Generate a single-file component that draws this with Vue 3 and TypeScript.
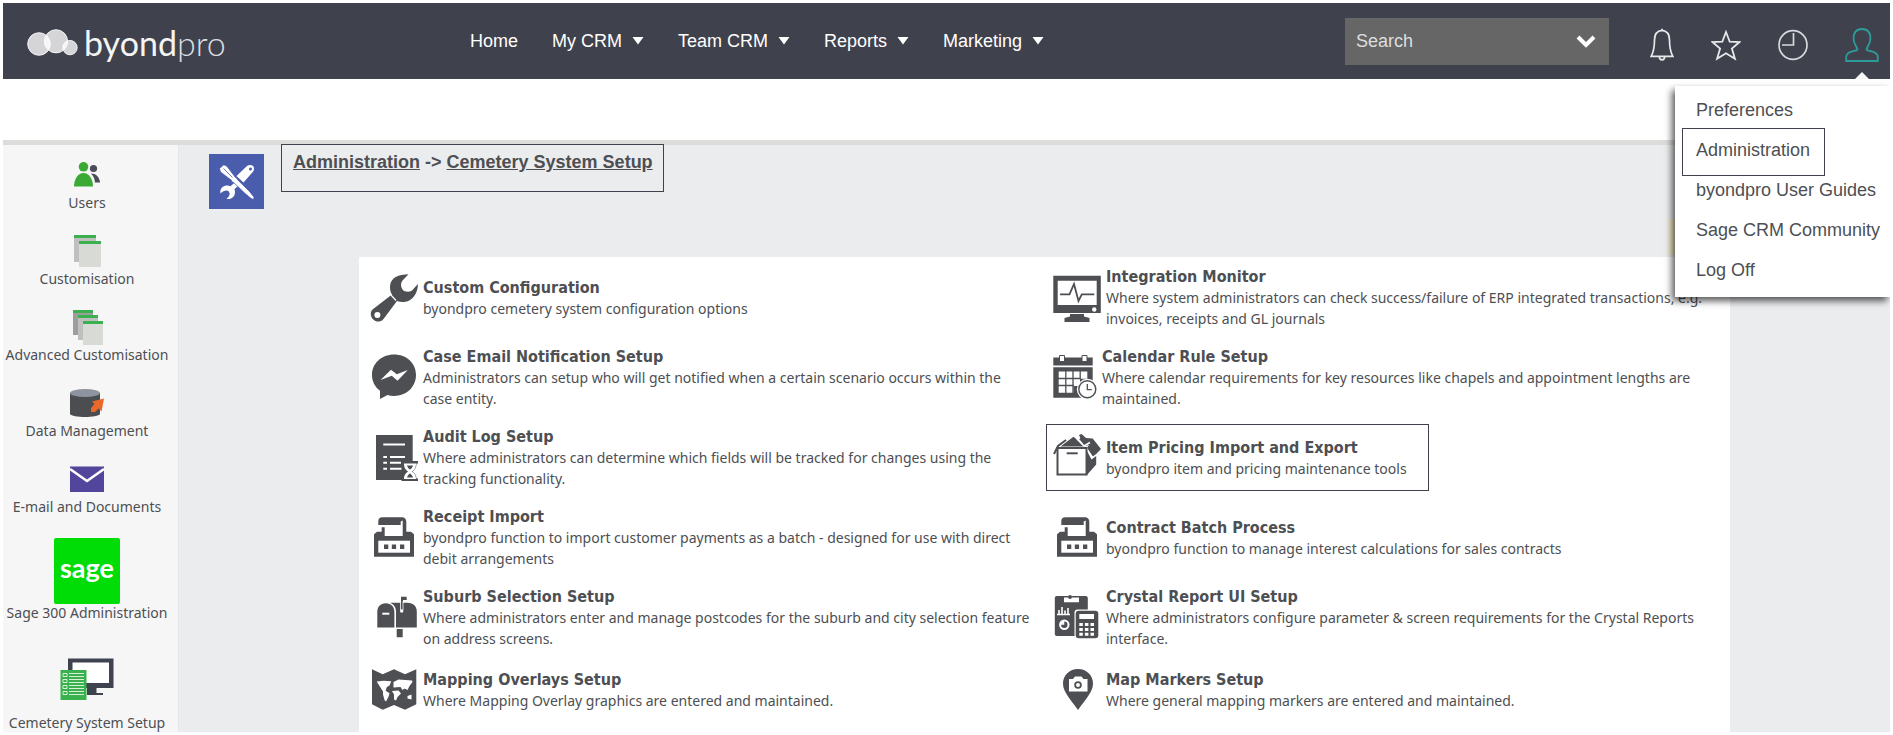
<script setup lang="ts">
import { ref } from 'vue'

interface NavEntry {
  label: string
  hasMenu: boolean
}

interface SetupItem {
  icon: string
  title: string
  text: string
  highlighted?: boolean
}

const search = ref('')

const nav: NavEntry[] = [
  { label: 'Home', hasMenu: false },
  { label: 'My CRM', hasMenu: true },
  { label: 'Team CRM', hasMenu: true },
  { label: 'Reports', hasMenu: true },
  { label: 'Marketing', hasMenu: true },
]

const sideLinks = [
  { icon: 'users', label: 'Users' },
  { icon: 'pages', label: 'Customisation' },
  { icon: 'stack', label: 'Advanced Customisation' },
  { icon: 'data', label: 'Data Management' },
  { icon: 'mail', label: 'E-mail and Documents' },
  { icon: 'sage', label: 'Sage 300 Administration' },
  { icon: 'cemetery', label: 'Cemetery System Setup' },
]

const userMenu = [
  { label: 'Preferences', marked: false },
  { label: 'Administration', marked: true },
  { label: 'byondpro User Guides', marked: false },
  { label: 'Sage CRM Community', marked: false },
  { label: 'Log Off', marked: false },
]

const items: SetupItem[] = [
  { icon: 'wrench', title: 'Custom Configuration', text: 'byondpro cemetery system configuration options' },
  { icon: 'monitor', title: 'Integration Monitor', text: 'Where system administrators can check success/failure of ERP integrated transactions, e.g. invoices, receipts and GL journals' },
  { icon: 'message', title: 'Case Email Notification Setup', text: 'Administrators can setup who will get notified when a certain scenario occurs within the case entity.' },
  { icon: 'calendar', title: 'Calendar Rule Setup', text: 'Where calendar requirements for key resources like chapels and appointment lengths are maintained.' },
  { icon: 'log', title: 'Audit Log Setup', text: 'Where administrators can determine which fields will be tracked for changes using the tracking functionality.' },
  { icon: 'box', title: 'Item Pricing Import and Export', text: 'byondpro item and pricing maintenance tools', highlighted: true },
  { icon: 'receipt', title: 'Receipt Import', text: 'byondpro function to import customer payments as a batch - designed for use with direct debit arrangements' },
  { icon: 'receipt', title: 'Contract Batch Process', text: 'byondpro function to manage interest calculations for sales contracts' },
  { icon: 'mailbox', title: 'Suburb Selection Setup', text: 'Where administrators enter and manage postcodes for the suburb and city selection feature on address screens.' },
  { icon: 'report', title: 'Crystal Report UI Setup', text: 'Where administrators configure parameter & screen requirements for the Crystal Reports interface.' },
  { icon: 'map', title: 'Mapping Overlays Setup', text: 'Where Mapping Overlay graphics are entered and maintained.' },
  { icon: 'pin', title: 'Map Markers Setup', text: 'Where general mapping markers are entered and maintained.' },
]
</script>

<template>
  <div class="page">
    <header class="topbar">
      <a class="brand" href="#">
        <svg class="brand-mark" width="51" height="28" viewBox="0 0 51 28" aria-hidden="true">
          <g fill="#fff" fill-opacity=".78" stroke="#fff" stroke-opacity=".85">
            <circle cx="12" cy="15" r="11.3" />
            <circle cx="29" cy="12.3" r="11.6" />
            <circle cx="43" cy="18.6" r="7.2" />
          </g>
        </svg>
        <span class="brand-name"><span>byond</span><span class="brand-light">pro</span></span>
      </a>
      <nav class="nav">
        <template v-for="entry in nav" :key="entry.label">
          <button v-if="entry.hasMenu" class="nav-item" type="button">
            {{ entry.label }}
            <svg width="12" height="8" viewBox="0 0 12 8" aria-hidden="true"><path d="M.500 0h11L6 7.500z" fill="#fff" /></svg>
          </button>
          <a v-else class="nav-item" href="#">{{ entry.label }}</a>
        </template>
      </nav>
      <form class="search" @submit.prevent>
        <input v-model="search" type="text" placeholder="Search" aria-label="Search" />
        <button type="button" aria-label="Search options">
          <svg width="20" height="13" viewBox="0 0 20 13"><path d="M2 2l8 8 8-8" fill="none" stroke="#fff" stroke-width="4" /></svg>
        </button>
      </form>
      <div class="tools">
        <button type="button" aria-label="Notifications">
          <svg width="24" height="34" viewBox="0 0 24 34" fill="none" stroke="#e8e8ea" stroke-width="1.7">
            <path d="M12 2.4c-5.200 .6-7.500 4-7.500 9.600 0 8-1 12-3.300 16.300h21.600C20.500 24 19.500 20 19.500 12c0-5.600-2.300-9-7.500-9.600z" />
            <path d="M9.300 28.500a2.700 3.300 0 0 0 5.400 0M12 .8v2" />
          </svg>
        </button>
        <button type="button" aria-label="Favourites">
          <svg width="30" height="34" viewBox="0 0 30 34" fill="none" stroke="#e8e8ea" stroke-width="1.8">
            <path d="M15 4l3.700 9.700 9.900.3-7.700 6.600 3 10.200L15 25.200l-8.900 5.600 3-10.200L1.400 14l9.900-.3z" />
          </svg>
        </button>
        <button type="button" aria-label="Recent">
          <svg width="30" height="34" viewBox="0 0 30 34" fill="none" stroke="#d8d9dc" stroke-width="1.7">
            <ellipse cx="15" cy="17" rx="14" ry="14.400" />
            <path d="M15.500 5v12H4" />
          </svg>
        </button>
        <button type="button" aria-label="User menu">
          <svg width="34" height="34" viewBox="0 0 34 34" fill="none" stroke="#2e9a9a" stroke-width="1.8">
            <path d="M12.500 21.500c-.2-2-3.300-5-3.800-9.500C8 5 11 1 17 1s9 4 8.300 11c-.5 4.500-3.600 7.500-3.800 9.500 1.500 2.500 11.300 1 11.300 7.500v4H1.200v-4c0-6.500 9.800-5 11.300-7.500z" />
          </svg>
        </button>
      </div>
      <svg class="pointer" width="14" height="7" viewBox="0 0 14 7" aria-hidden="true"><path d="M0 7l7-7 7 7z" fill="#f6f6f6" /></svg>
    </header>

    <div class="strip"></div>

    <div class="body">
      <aside class="sidebar">
        <a v-for="link in sideLinks" :key="link.label" class="side-link" href="#">
          <svg v-if="link.icon === 'users'" width="36" height="36" viewBox="0 0 36 36">
            <circle cx="24.500" cy="10.500" r="3.600" fill="#4a4c59" />
            <path d="M22 15.500c5 0 8 3 9.200 9H26c-.3-4-1.500-6.500-4-9z" fill="#4a4c59" />
            <circle cx="14.500" cy="8.800" r="4.800" fill="#3aaa35" />
            <path d="M5 28.500c0-7 3.500-13.500 9.500-13.500S24 21.500 24 28.500z" fill="#3aaa35" />
          </svg>
          <svg v-else-if="link.icon === 'pages'" width="36" height="36" viewBox="0 0 36 36">
            <path d="M5 1h22v27H5z" fill="#bfc0be" /><path d="M5 1h22v3H5z" fill="#3bb04f" />
            <path d="M10 7h22v26H10z" fill="#d8dad5" /><path d="M10 7h22v3H10z" fill="#3bb04f" />
          </svg>
          <svg v-else-if="link.icon === 'stack'" width="36" height="36" viewBox="0 0 36 36">
            <path d="M4 0h20v25H4z" fill="#9c9d9c" /><path d="M4 0h20v3H4z" fill="#3bb04f" />
            <path d="M9 5h20v25H9z" fill="#bfc0be" /><path d="M9 5h20v3H9z" fill="#3bb04f" />
            <path d="M14 11h20v24H14z" fill="#d8dad5" /><path d="M14 11h20v3H14z" fill="#3bb04f" />
          </svg>
          <svg v-else-if="link.icon === 'data'" width="36" height="36" viewBox="0 0 36 36">
            <path d="M1 7v21c2 4 28 4 30 0V7z" fill="#4b4d51" />
            <ellipse cx="16" cy="7" rx="15" ry="4" fill="#8d939f" />
            <path d="M35 12.500l-12 3 2.500 2.500-3.500 4v4h4l3.500-3.500 3 3z" fill="#e9682a" />
          </svg>
          <svg v-else-if="link.icon === 'mail'" width="36" height="36" viewBox="0 0 36 36">
            <path d="M1 4.500h34v25.500H1z" fill="#52459c" />
            <path d="M1 7l17 12L35 7" fill="none" stroke="#fff" stroke-width="2.600" />
          </svg>
          <span v-else-if="link.icon === 'sage'" class="sage-tile">sage</span>
          <svg v-else width="54" height="70" viewBox="0 0 54 70">
            <path d="M8 14.500h45.500V44H8z" fill="#3f4350" /><path d="M12.500 18.500H49V39H12.500z" fill="#fff" />
            <path d="M27 44h9.500v5H43v2H27z" fill="#3f4350" />
            <path d="M.5 26h26v30H.5z" fill="#3bb04f" />
            <g fill="none" stroke="#d6efd6" stroke-width="1">
              <path d="M3 29.500h4v3H3zM3 35.500h4v3H3zM3 41.500h4v3H3zM3 47.500h4v3H3z" />
              <path d="M9 29.500h15M9 32.500h15M9 35.500h15M9 38.500h15M9 41.500h15M9 44.500h15M9 47.500h15M9 50.500h15" />
            </g>
          </svg>
          <span class="side-label">{{ link.label }}</span>
        </a>
      </aside>

      <main class="main">
        <div class="heading">
          <svg class="heading-icon" width="55" height="55" viewBox="0 0 55 55" aria-hidden="true">
            <path d="M0 0h55v55H0z" fill="#4a5dac" />
            <g fill="#fff">
              <path d="M38 12c2-1.500 7-1.500 7 2.500 0 1.800-.6 2.800-1.500 3.700L34.500 28.500 27.500 22z" />
              <path d="M28 26.500l3.500 3.500-6 5c1 3 .5 7-2 8.500-2 1.500-4 1.800-6 1.300 3-2.500 4-4.500 2.500-7-1.500-2-5-1.500-8.500 1.700-.8-3.500 1-6.500 4-7.500 2-.8 4.500-.5 6 .3z" />
              <path d="M10.500 14.500l4-3.500c2 0 3 .8 4 2l8 10.500c1 .3 1.700 1 2 2.200l11.500 11.200 5 6.200-.4 2.400-2.500-1-6-5-11.500-11c-1.200-.3-2-1-2.200-2.200L11.500 18z" stroke="#4a5dac" stroke-width=".8" />
            </g>
            <circle cx="41.500" cy="15" r="1.500" fill="#4a5dac" />
            <path d="M14.500 14.500l9 9" stroke="#4a5dac" stroke-width=".8" />
          </svg>
          <h1 class="crumbs"><a href="#">Administration</a> -&gt; <a href="#">Cemetery System Setup</a></h1>
          <div class="note"></div>
        </div>

        <section class="panel">
          <a v-for="item in items" :key="item.title" href="#" class="item" :class="{ highlighted: item.highlighted }">
            <svg class="item-icon" :class="item.icon" height="48" :viewBox="item.icon === 'calendar' ? '0 0 44 48' : '0 0 48 48'" aria-hidden="true">
              <template v-if="item.icon === 'wrench'">
                <path d="M38.500.2C29 .2 20 3.500 20 13c0 3 .7 5.500 2 7.500L2.500 35.500c-4.500 5 .5 12.500 6.500 12 2-.2 3.300-1 4.500-2.500L27 27c2 .8 4.500 1.200 7 1 8.500-.8 14-8.500 13.900-18L42 16.500c-3 2-7.500 1.500-9.500-1-2-3-2-7 .5-9.500z" />
                <path d="M20.500 20.500l5.500 6" stroke="#fff" stroke-width="1.200" />
                <circle cx="7.400" cy="41" r="3" fill="#fff" />
              </template>
              <template v-else-if="item.icon === 'message'">
                <path d="M24 .6C11.500.6 2 9.500 2 21c0 6.500 3 12 8 15.800V45l7.500-4c2 .6 4.300.9 6.500.9 12.500 0 22-9 22-20.900S36.500.6 24 .6z" />
                <path d="M10.500 26L21 15.700l5.800 4.500 11-4.200L27.500 26.800l-5.700-5z" fill="#fff" />
              </template>
              <template v-else-if="item.icon === 'log'">
                <path d="M6 1h36.700v45H6z" />
                <path d="M13.300 10.500H35M20 23h15M20 28.700h11M20 34.700h13M13.300 23h3.700M13.300 28.700h3.700M13.300 34.700h3.700" stroke="#fff" stroke-width="1.900" />
                <path d="M31.500 27H48v2.500h-1.500c0 4-1.500 6-4 8 2.500 2 4 4 4 7H48V47H31.500z" />
                <path d="M34 29.500h12c0 4.500-1.500 6-4 8 2.500 2 4 3.500 4 7.500H34c0-4 1.500-5.500 4-7.500-2.500-2-4-3.500-4-8z" fill="#fff" />
                <path d="M37 31.500h6c-.5 2-1.500 3-3 4-1.500-1-2.500-2-3-4zM37 43.500c.5-2 1.500-3 3-4 1.500 1 2.500 2 3 4z" />
              </template>
              <template v-else-if="item.icon === 'receipt'">
                <path d="M8.300 11V7c0-2.500 1.500-3.800 4-3.800h19c3.500 0 5 1.800 5 5v9.500H41l3 2.500v22.500H4V20.200l3-2.500h4.700v-4.500h3V22h18V6.500l-2 1V11z" />
                <path d="M8.300 26.700h31.700v12H8.300z" fill="#fff" />
                <path d="M14 30.500h4.300V35H14zM21.800 30.500h4.300V35h-4.300zM30 30.500h4.300V35H30z" />
              </template>
              <template v-else-if="item.icon === 'mailbox'">
                <path d="M7.300 33.500V18c0-5 3-8.700 8.500-8.700s8.600 3.700 8.600 8.700v15.500zM20 8.700h17.500c6 0 9.300 3.500 9.300 9v15.800H26V18c0-4.500-2-7.800-6-9.300zM26.700 35h6v8.300h-6zM31 2.700h5.700V6H33v4h-2z" />
                <path d="M12.300 18.700h7v2h-7z" fill="#fff" />
                <path d="M30.500 7v9M33 7v9" stroke="#fff" stroke-width=".8" /><circle cx="31.700" cy="17" r="1.700" fill="#fff" />
              </template>
              <template v-else-if="item.icon === 'map'">
                <path d="M2 3.300l10.700 5 11.300-5 11 5 11.300-5v35l-11.300 5.400L24 39l-11.300 4.700L2 38.300z" />
                <path d="M6.700 15.500l7-.8 7.500.5-1.500 4-3 2-1 3.500 3.800 2.500-1 3.500-2.500 4.800-1.500-1.500-1.500-5.500 0-3-3.500-5.500zM23.500 16l5-2.500L42 14.500l.5 1.500-3 4-2 4-3-1.500-2 1.500-2-3-7 .5zM22 25l6.500-.5 2.500 3-3.500 3.500-1.500 3.500-2-1v-5zM37.500 30l4-1.500v5l-4-1z" fill="#fff" />
              </template>
              <template v-else-if="item.icon === 'monitor'">
                <path d="M.3 1.700h47.500V39H.3zM17 40h14v2.500l5.500 1.500v4h-25v-4l5.500-1.500z" />
                <path d="M4.700 6.700h39V31h-39z" fill="#fff" />
                <path d="M7 20.300h9.500L21 10l4.500 17 3.300-6.700h12.500" fill="none" stroke="#4d4f53" stroke-width="1.800" />
                <circle cx="41.300" cy="35.500" r="2.200" fill="#fff" />
              </template>
              <template v-else-if="item.icon === 'calendar'">
                <path d="M.3 3.500h39.400v8H.3zM.3 13.300h39.400v30.400H.3z" />
                <path d="M5.700 17.500h28.600v7.300H27V32h-6.500v6.700H5.700z" fill="#fff" />
                <path d="M12.800 17v22M20 17v22M27.200 17v8M5 24.500h22M5 31.500h16" stroke="#4d4f53" stroke-width="1.300" />
                <path d="M6.500 1.500h5v6h-5zM29 1.500h5v6h-5z" fill="#fff" stroke="#4d4f53" />
                <circle cx="34.300" cy="35.300" r="10.500" fill="#fff" />
                <circle cx="34.300" cy="35.300" r="8.500" fill="#fff" stroke="#4d4f53" stroke-width="1.400" />
                <path d="M34.300 30v5.700h4.500" fill="none" stroke="#4d4f53" stroke-width="1.300" />
              </template>
              <template v-else-if="item.icon === 'box'">
                <path d="M7.500 12.500L20.500 2.700 32 12.500zM26 1l2.500-1L33 4l6.700.5L48 15l-7.700 8-6.300-9 2-3-5 1z" />
                <path d="M1 20l4-8L13 6M27 4.500l5.500 6L38 9" fill="none" stroke="#4d4f53" stroke-width="2" />
                <path d="M24 5l7 7 6-3.500M33.500 14l5.500 10 4-3" fill="none" stroke="#fff" stroke-width="1.500" />
                <path d="M33.500 16l5 9.500 4.700-3.500v8.500l-9.700 11z" />
                <path d="M4.500 14h29v26.500h-29z" fill="#fff" stroke="#4d4f53" stroke-width="2" />
                <path d="M13.700 19.300h11" stroke="#4d4f53" stroke-width="2" />
              </template>
              <template v-else-if="item.icon === 'report'">
                <rect x="1.800" y="2" width="33" height="40" rx="2" />
                <path d="M11 3.500h4c0-2 4-2 4 0h7v4.800H11z" fill="#fff" /><circle cx="17" cy="3" r="2" />
                <path d="M4 20.500h13M6 20v-4M9 20v-7M12 20v-3.500M15 20v-6" stroke="#fff" stroke-width="1.600" />
                <circle cx="11.300" cy="30.700" r="5.200" fill="#fff" /><path d="M11.300 30.700V27.500a3.200 3.200 0 1 1-3.200 3.200z" />
                <rect x="21.500" y="15.500" width="25" height="30" rx="3" fill="#fff" />
                <rect x="22.700" y="16.700" width="22.600" height="27.600" rx="3" />
                <path d="M26.300 20H41v5H26.300z" fill="#fff" />
                <path d="M26.300 30.500H41M26.300 35.500H41M26.300 40.300H41" stroke="#fff" stroke-width="3" stroke-dasharray="3.500 2.100" />
              </template>
              <template v-else>
                <path d="M25 3c8.500 0 15 6.300 15 14.500 0 8-6 14-15 26.500C16 31.500 10 25.500 10 17.500 10 9.300 16.500 3 25 3z" />
                <path d="M16 13h4l2-2.500h6.500l2 2.500h4v12.500H16z" fill="#fff" />
                <circle cx="25" cy="19" r="2.900" fill="none" stroke="#4d4f53" stroke-width="1.800" />
              </template>
            </svg>
            <span class="item-copy">
              <strong>{{ item.title }}</strong>
              <span>{{ item.text }}</span>
            </span>
          </a>
        </section>
      </main>
    </div>

    <ul class="user-menu">
      <li v-for="entry in userMenu" :key="entry.label" :class="{ marked: entry.marked }">
        <a href="#">{{ entry.label }}</a>
      </li>
    </ul>
  </div>
</template>

<style>
body {
  margin: 0;
  background: #fff;
}
</style>

<style scoped>
* {
  box-sizing: border-box;
}

.page {
  position: relative;
  display: flex;
  flex-direction: column;
  min-height: calc(100vh - 6px);
  margin: 3px;
  overflow: hidden;
  color: #4d4f53;
  font-family: "Liberation Sans", Arial, sans-serif;
  font-size: 18px;
}

a {
  color: inherit;
  text-decoration: none;
}

button {
  padding: 0;
  border: 0;
  background: none;
  color: inherit;
  font: inherit;
  cursor: pointer;
}

svg {
  display: block;
  flex: none;
}

.topbar {
  position: relative;
  display: flex;
  align-items: center;
  height: 76px;
  padding: 0 11px 0 24px;
  background: #3f424d;
  color: #fff;
}

.brand {
  display: flex;
  align-items: center;
  gap: 6px;
  width: 443px;
  padding-top: 4px;
}

.brand-name {
  font: 400 34px/40px Lato, sans-serif;
  color: #f4f4f5;
}

.brand-light {
  font-weight: 300;
  color: #dcdde0;
}

.nav {
  display: flex;
  gap: 34px;
}

.nav-item {
  display: flex;
  align-items: center;
  gap: 10px;
  line-height: 22px;
}

.search {
  display: flex;
  align-items: center;
  width: 264px;
  height: 47px;
  margin-left: auto;
  padding: 0 13px 0 11px;
  background: #666;
}

.search input {
  flex: 1;
  min-width: 0;
  padding: 0;
  border: 0;
  outline: 0;
  background: none;
  color: #fff;
  font: inherit;
}

.search input::placeholder {
  color: #dedede;
  opacity: 1;
}

.tools {
  display: flex;
  gap: 37px;
  margin-left: 41px;
  padding-top: 8px;
}

.pointer {
  position: absolute;
  right: 21px;
  bottom: 0;
}

.strip {
  height: 66px;
  border-bottom: 5px solid #dcdcda;
}

.body {
  display: flex;
  flex: 1;
  background: #ebecee;
}

.sidebar {
  display: flex;
  flex: none;
  flex-direction: column;
  gap: 22px;
  width: 176px;
  padding: 13px 7px 0 0;
  border-right: 1px solid #e6e6e8;
  background: #f6f6f6;
}

.side-link {
  display: flex;
  flex-direction: column;
  align-items: center;
  font: 14px/18px "Noto Sans", Tahoma, sans-serif;
  white-space: nowrap;
}

.sage-tile {
  width: 66px;
  height: 66px;
  border-radius: 2px;
  background: #00dc06;
  color: #fff;
  font: 700 27px/60px Lato, sans-serif;
  text-align: center;
}

.main {
  display: flex;
  flex: 1;
  flex-direction: column;
  min-width: 0;
}

.heading {
  display: flex;
  align-items: flex-start;
  height: 112px;
  padding: 0 160px 0 30px;
}

.heading-icon {
  margin-top: 9px;
}

.crumbs {
  height: 48px;
  margin: -1px 0 0 17px;
  padding: 7px 10px 0 11px;
  border: 1px solid #3f424d;
  font-size: 18px;
  line-height: 20px;
}

.crumbs a {
  text-decoration: underline;
}

.note {
  align-self: flex-end;
  width: 62px;
  height: 36px;
  margin: 0 0 2px auto;
  background: #f3ecd0;
}

.panel {
  display: grid;
  flex: 1;
  grid-template-columns: 1fr 1fr;
  grid-auto-rows: max-content;
  align-content: start;
  gap: 17px 8px;
  margin: 0 160px 0 180px;
  padding: 9px 2px 16px 11px;
  background: #fff;
}

.item {
  display: flex;
  align-items: center;
  gap: 5px;
  padding-right: 14px;
}

.item-icon {
  width: 48px;
  fill: #4d4f53;
}

.item-icon.calendar {
  width: 44px;
}

.item-copy {
  display: flex;
  flex-direction: column;
  font: 14px/21px "Noto Sans", Tahoma, sans-serif;
}

.item-copy strong {
  font: 700 16px/21px "DejaVu Sans Condensed", "DejaVu Sans", Tahoma, sans-serif;
}

.item.highlighted {
  justify-self: start;
  margin: -2px 0 -2px -7px;
  padding: 0 21px 0 6px;
  border: 1px solid #3f424d;
}

.user-menu {
  position: absolute;
  top: 83px;
  right: 0;
  width: 215px;
  margin: 0;
  padding: 4px 0 7px 21px;
  background: #fff;
  box-shadow: -3px 4px 7px rgba(0, 0, 0, .65);
  list-style: none;
}

.user-menu li {
  position: relative;
  line-height: 40px;
  white-space: nowrap;
}

.user-menu .marked::after {
  content: "";
  position: absolute;
  inset: -2px 65px -6px -14px;
  border: 1px solid #3f424d;
  pointer-events: none;
}
</style>
